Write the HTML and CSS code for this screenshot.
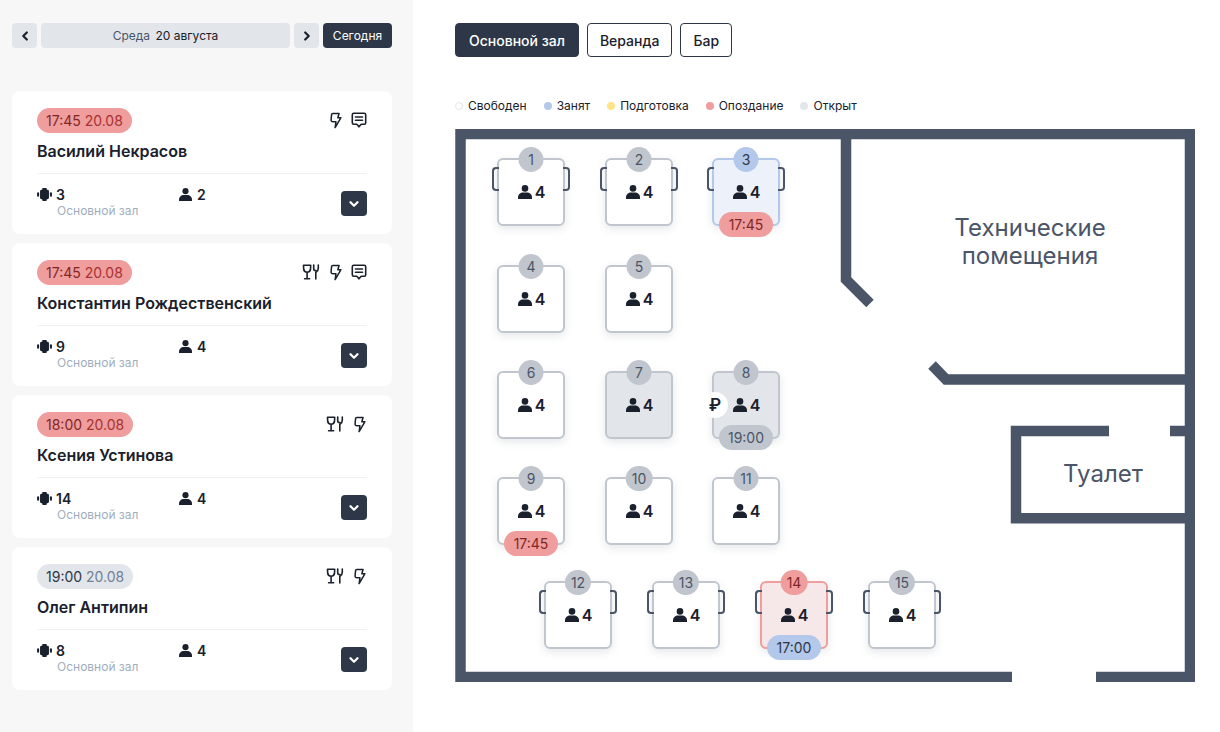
FILE: index.html
```html
<!DOCTYPE html>
<html lang="ru">
  <head>
    <meta charset="UTF-8" />
    <title>Бронирование столов</title>
    <link rel="stylesheet" href="styles.css">
  </head>
  <body>
    <svg class="sprite" width="0" height="0">
      <symbol id="i-user" viewBox="0 0 16 14">
        <circle cx="8" cy="3.4" r="3.3" />
        <path d="M1 14v-1.6C1 9.6 3.6 7.6 6 7.6h4c2.4 0 5 2 5 4.8V14z" />
      </symbol>
      <symbol id="i-table" viewBox="0 0 16 14">
        <rect x="3.2" y="1.8" width="9.6" height="10.4" rx="1.6" />
        <rect x="5.5" y="0" width="5" height="2.6" rx="1" />
        <rect x="5.5" y="11.4" width="5" height="2.6" rx="1" />
        <rect x="0" y="4.6" width="2.2" height="4.8" rx="1" />
        <rect x="13.8" y="4.6" width="2.2" height="4.8" rx="1" />
      </symbol>
      <symbol id="i-bolt" viewBox="0 0 16 18">
        <path class="line" d="M5 1.5h6.8l-1.3 4.6h3.2L7.6 16.5l.9-6.2H5.4C4 10.3 3.2 9.500 3.300 8.200L3.800 2.700C3.900 2 4.300 1.500 5 1.500z" />
      </symbol>
      <symbol id="i-note" viewBox="0 0 16 16">
        <path class="line" d="M2.800 1.200h10.400c.9 0 1.500.6 1.500 1.500v8.100c0 .9-.6 1.500-1.500 1.500H10.200L8 14.800 5.800 12.300H2.800c-.9 0-1.500-.6-1.500-1.500V2.700c0-.9.6-1.500 1.500-1.500z" />
        <path class="line" d="M4.500 5h7M4.500 8.300h7" />
      </symbol>
      <symbol id="i-food" viewBox="0 0 18 16">
        <path class="line" d="M1.500 1.200h7.200L8.500 5.200C8.300 7 7 8.200 5.100 8.200S1.900 7 1.700 5.200zM5.100 8.200v6.300M2.600 14.800h5" />
        <path class="line" d="M11.700 1v3.800c0 1.200 1 1.800 2.100 1.800M16.300 1v3.200c0 2.200-1.100 3.500-2.500 4.300v6.500" />
      </symbol>
      <symbol id="i-left" viewBox="0 0 10 10">
        <path class="line thick" d="M6.800 1.500 3.300 5l3.500 3.500" />
      </symbol>
      <symbol id="i-right" viewBox="0 0 10 10">
        <path class="line thick" d="M3.200 1.500 6.700 5 3.200 8.500" />
      </symbol>
      <symbol id="i-down" viewBox="0 0 10 10">
        <path class="line thick" d="M1.500 3.200 5 6.700l3.500-3.500" />
      </symbol>
    </svg>

    <div class="app">
      <aside class="side">
        <div class="date-bar">
          <button class="nav-btn"><svg class="i-nav"><use href="#i-left" /></svg></button>
          <div class="date-field"><span class="weekday">Среда</span> 20 августа</div>
          <button class="nav-btn"><svg class="i-nav"><use href="#i-right" /></svg></button>
          <button class="today-btn">Сегодня</button>
        </div>

        <div class="cards">
          <section class="card">
            <div class="card-top">
              <span class="pill pill-red">17:45 <span class="pill-date">20.08</span></span>
              <div class="flags">
                <svg class="i-bolt"><use href="#i-bolt" /></svg>
                <svg class="i-note"><use href="#i-note" /></svg>
              </div>
            </div>
            <h3 class="guest">Василий Некрасов</h3>
            <div class="card-info">
              <div class="info-table">
                <div class="info-val"><svg class="i-small"><use href="#i-table" /></svg>3</div>
                <div class="hall">Основной зал</div>
              </div>
              <div class="info-val info-people"><svg class="i-small"><use href="#i-user" /></svg>2</div>
              <button class="more-btn"><svg class="i-nav"><use href="#i-down" /></svg></button>
            </div>
          </section>

          <section class="card">
            <div class="card-top">
              <span class="pill pill-red">17:45 <span class="pill-date">20.08</span></span>
              <div class="flags">
                <svg class="i-food"><use href="#i-food" /></svg>
                <svg class="i-bolt"><use href="#i-bolt" /></svg>
                <svg class="i-note"><use href="#i-note" /></svg>
              </div>
            </div>
            <h3 class="guest">Константин Рождественский</h3>
            <div class="card-info">
              <div class="info-table">
                <div class="info-val"><svg class="i-small"><use href="#i-table" /></svg>9</div>
                <div class="hall">Основной зал</div>
              </div>
              <div class="info-val info-people"><svg class="i-small"><use href="#i-user" /></svg>4</div>
              <button class="more-btn"><svg class="i-nav"><use href="#i-down" /></svg></button>
            </div>
          </section>

          <section class="card">
            <div class="card-top">
              <span class="pill pill-red">18:00 <span class="pill-date">20.08</span></span>
              <div class="flags">
                <svg class="i-food"><use href="#i-food" /></svg>
                <svg class="i-bolt"><use href="#i-bolt" /></svg>
              </div>
            </div>
            <h3 class="guest">Ксения Устинова</h3>
            <div class="card-info">
              <div class="info-table">
                <div class="info-val"><svg class="i-small"><use href="#i-table" /></svg>14</div>
                <div class="hall">Основной зал</div>
              </div>
              <div class="info-val info-people"><svg class="i-small"><use href="#i-user" /></svg>4</div>
              <button class="more-btn"><svg class="i-nav"><use href="#i-down" /></svg></button>
            </div>
          </section>

          <section class="card">
            <div class="card-top">
              <span class="pill pill-grey">19:00 <span class="pill-date">20.08</span></span>
              <div class="flags">
                <svg class="i-food"><use href="#i-food" /></svg>
                <svg class="i-bolt"><use href="#i-bolt" /></svg>
              </div>
            </div>
            <h3 class="guest">Олег Антипин</h3>
            <div class="card-info">
              <div class="info-table">
                <div class="info-val"><svg class="i-small"><use href="#i-table" /></svg>8</div>
                <div class="hall">Основной зал</div>
              </div>
              <div class="info-val info-people"><svg class="i-small"><use href="#i-user" /></svg>4</div>
              <button class="more-btn"><svg class="i-nav"><use href="#i-down" /></svg></button>
            </div>
          </section>
        </div>
      </aside>

      <main class="content">
        <nav class="tabs">
          <button class="tab tab-active">Основной зал</button>
          <button class="tab">Веранда</button>
          <button class="tab">Бар</button>
        </nav>

        <ul class="legend">
          <li><span class="dot dot-free"></span>Свободен</li>
          <li><span class="dot dot-busy"></span>Занят</li>
          <li><span class="dot dot-prep"></span>Подготовка</li>
          <li><span class="dot dot-late"></span>Опоздание</li>
          <li><span class="dot dot-open"></span>Открыт</li>
        </ul>

        <div class="floor">
          <!-- walls, coordinates are relative to the floor box -->
          <svg class="walls" width="740" height="553" viewBox="0 0 740 553">
            <path d="M557 548H735V5H5.500V548H557" />
            <path d="M391 5V150.500L415 174.500" />
            <path d="M477 236 491 250.500H730" />
            <path d="M654 302H561V389.300H730" />
            <path d="M715 302H730" />
            <rect class="gap" x="557" y="540" width="84" height="13" />
          </svg>
          <div class="room room-tech">Технические<br />помещения</div>
          <div class="room room-wc">Туалет</div>

          <!-- row 1 -->
          <div class="table chairs t-1">
            <span class="num">1</span>
            <span class="seats"><svg class="i-seat"><use href="#i-user" /></svg>4</span>
          </div>
          <div class="table chairs t-2">
            <span class="num">2</span>
            <span class="seats"><svg class="i-seat"><use href="#i-user" /></svg>4</span>
          </div>
          <div class="table chairs busy t-3">
            <span class="num">3</span>
            <span class="seats"><svg class="i-seat"><use href="#i-user" /></svg>4</span>
            <span class="time time-red">17:45</span>
          </div>

          <!-- row 2 -->
          <div class="table t-4">
            <span class="num">4</span>
            <span class="seats"><svg class="i-seat"><use href="#i-user" /></svg>4</span>
          </div>
          <div class="table t-5">
            <span class="num">5</span>
            <span class="seats"><svg class="i-seat"><use href="#i-user" /></svg>4</span>
          </div>

          <!-- row 3 -->
          <div class="table t-6">
            <span class="num">6</span>
            <span class="seats"><svg class="i-seat"><use href="#i-user" /></svg>4</span>
          </div>
          <div class="table open t-7">
            <span class="num">7</span>
            <span class="seats"><svg class="i-seat"><use href="#i-user" /></svg>4</span>
          </div>
          <div class="table open t-8">
            <span class="num">8</span>
            <span class="rub">₽</span>
            <span class="seats"><svg class="i-seat"><use href="#i-user" /></svg>4</span>
            <span class="time time-grey">19:00</span>
          </div>

          <!-- row 4 -->
          <div class="table t-9">
            <span class="num">9</span>
            <span class="seats"><svg class="i-seat"><use href="#i-user" /></svg>4</span>
            <span class="time time-red">17:45</span>
          </div>
          <div class="table t-10">
            <span class="num">10</span>
            <span class="seats"><svg class="i-seat"><use href="#i-user" /></svg>4</span>
          </div>
          <div class="table t-11">
            <span class="num">11</span>
            <span class="seats"><svg class="i-seat"><use href="#i-user" /></svg>4</span>
          </div>

          <!-- row 5 -->
          <div class="table chairs t-12">
            <span class="num">12</span>
            <span class="seats"><svg class="i-seat"><use href="#i-user" /></svg>4</span>
          </div>
          <div class="table chairs t-13">
            <span class="num">13</span>
            <span class="seats"><svg class="i-seat"><use href="#i-user" /></svg>4</span>
          </div>
          <div class="table chairs late t-14">
            <span class="num">14</span>
            <span class="seats"><svg class="i-seat"><use href="#i-user" /></svg>4</span>
            <span class="time time-blue">17:00</span>
          </div>
          <div class="table chairs t-15">
            <span class="num">15</span>
            <span class="seats"><svg class="i-seat"><use href="#i-user" /></svg>4</span>
          </div>
        </div>
      </main>
    </div>
  </body>
</html>
```
FILE: styles.css
```css
* {
  box-sizing: border-box;
}

html,
body {
  height: 100%;
}

body {
  margin: 0;
  overflow: hidden;
  font-family: Inter, "Noto Sans", sans-serif;
  color: #1a202c;
  background: #fff;
}

button {
  font-family: inherit;
  border: 0;
  padding: 0;
  cursor: pointer;
}

.sprite {
  position: absolute;
}

.line {
  fill: none;
  stroke: currentColor;
  stroke-width: 1.6;
  stroke-linejoin: round;
  stroke-linecap: round;
}

.line.thick {
  stroke-width: 2.2;
}

.app {
  display: flex;
  height: 732px;
}

/* Sidebar */

.side {
  width: 413px;
  flex: none;
  padding: 23px 21px 0 12px;
  background: #f7f7f8;
}

.date-bar {
  display: flex;
  gap: 4px;
  height: 25px;
  margin-bottom: 43px;
}

.nav-btn {
  display: flex;
  align-items: center;
  justify-content: center;
  width: 25px;
  background: #e2e5ea;
  border-radius: 4px;
  color: #1a202c;
}

.i-nav {
  width: 10px;
  height: 10px;
}

.date-field {
  flex: 1;
  line-height: 25px;
  text-align: center;
  font-size: 12px;
  background: #e2e5ea;
  border-radius: 4px;
}

.weekday {
  color: #4a5568;
  margin-right: 2px;
}

.today-btn {
  width: 69px;
  font-size: 12px;
  color: #fff;
  background: #2d3748;
  border-radius: 4px;
}

.cards {
  display: flex;
  flex-direction: column;
  gap: 9px;
}

.card {
  height: 143px;
  padding: 17px 25px 0;
  background: #fff;
  border-radius: 8px;
}

.card-top {
  display: flex;
  justify-content: space-between;
  align-items: center;
  height: 25px;
}

.pill {
  height: 25px;
  padding: 0 9px;
  line-height: 25px;
  font-size: 14px;
  border-radius: 13px;
}

.pill-red {
  color: #822727;
  background: #ef9d9d;
}

.pill-grey {
  color: #2d3748;
  background: #e2e5ea;
}

.pill-red .pill-date {
  color: #a83232;
}

.pill-grey .pill-date {
  color: #718096;
}

.flags {
  display: flex;
  align-items: center;
  gap: 8px;
  color: #1a202c;
  margin-top: -1px;
}

.i-bolt {
  width: 15px;
  height: 17px;
}

.i-note {
  width: 16px;
  height: 16px;
}

.i-food {
  width: 18px;
  height: 16px;
}

.guest {
  margin: 8px 0 0;
  padding-bottom: 12px;
  font-size: 16px;
  line-height: 20px;
  font-weight: 600;
  border-bottom: 1px solid #f0f1f3;
}

.card-info {
  display: flex;
  position: relative;
  padding-top: 13px;
}

.info-table {
  width: 141px;
}

.info-val {
  display: flex;
  align-items: center;
  gap: 4px;
  height: 15px;
  font-size: 14px;
  font-weight: 600;
}

.i-small {
  width: 15px;
  height: 13px;
  fill: #1a202c;
}

.hall {
  margin: 1px 0 0 20px;
  font-size: 12px;
  line-height: 15px;
  color: #a0aec0;
}

.more-btn {
  display: flex;
  align-items: center;
  justify-content: center;
  width: 26px;
  height: 25px;
  margin: 4px 0 0 auto;
  color: #fff;
  background: #2d3748;
  border-radius: 4px;
}

/* Hall plan */

.content {
  flex: 1;
  padding: 23px 25px 0 42px;
}

.tabs {
  display: flex;
  gap: 8px;
}

.tab {
  height: 34px;
  padding: 0 12px;
  font-size: 14px;
  font-weight: 500;
  color: #1a202c;
  background: #fff;
  border: 1px solid #2d3748;
  border-radius: 4px;
}

.tab-active {
  padding: 0 13px;
  color: #fff;
  background: #2d3748;
}

.legend {
  display: flex;
  gap: 17px;
  list-style: none;
  margin: 40px 0 0;
  padding: 0;
  height: 32px;
  font-size: 12px;
  line-height: 17px;
}

.legend li {
  display: flex;
  align-items: center;
  gap: 5px;
  height: 17px;
}

.dot {
  width: 8px;
  height: 8px;
  border-radius: 50%;
}

.dot-free {
  background: #fff;
  border: 1px solid #e2e5ea;
}

.dot-busy {
  background: #b3c8ea;
}

.dot-prep {
  background: #fde38a;
}

.dot-late {
  background: #ef9d9d;
}

.dot-open {
  background: #e2e5ea;
}

.floor {
  position: relative;
  width: 740px;
  height: 553px;
}

.walls {
  position: absolute;
  left: 0;
  top: 0;
}

.walls path {
  fill: none;
  stroke: #4a5568;
  stroke-width: 10.500;
}

.walls .gap {
  fill: #fff;
}

.room {
  position: absolute;
  text-align: center;
  font-size: 24px;
  line-height: 28px;
  color: #4a5568;
}

.room-tech {
  left: 475px;
  top: 85px;
  width: 200px;
}

.room-wc {
  left: 578px;
  top: 331px;
  width: 140px;
}

.table {
  position: absolute;
  display: flex;
  align-items: center;
  justify-content: center;
  width: 68px;
  height: 68px;
  background: #fff;
  border: 2px solid #c1c6ce;
  border-radius: 6px;
  box-shadow: 0 3px 8px rgba(45, 55, 72, 0.12);
}

.table.chairs::before,
.table.chairs::after {
  content: "";
  position: absolute;
  top: 7px;
  width: 5px;
  height: 20px;
  border: 2px solid #4a5568;
  border-radius: 4px;
  box-shadow: 0 30px 0 -0px transparent;
}

.table.chairs::before {
  left: -7px;
  border-right: 0;
  border-top-right-radius: 0;
  border-bottom-right-radius: 0;
}

.table.chairs::after {
  right: -7px;
  border-left: 0;
  border-top-left-radius: 0;
  border-bottom-left-radius: 0;
}

.table.busy {
  background: #edf2fa;
  border-color: #b3c8ea;
}

.table.late {
  background: #f6e8e8;
  border-color: #ef9d9d;
}

.table.open {
  background: #e2e5ea;
  border-color: #c1c6ce;
}

.num {
  position: absolute;
  left: 50%;
  top: -13px;
  min-width: 25px;
  height: 25px;
  padding: 0 6px;
  transform: translateX(-50%);
  text-align: center;
  line-height: 25px;
  font-size: 14px;
  color: #4a5568;
  background: #c1c6ce;
  border-radius: 13px;
}

.busy .num {
  color: #2d3748;
  background: #b3c8ea;
}

.late .num {
  color: #822727;
  background: #ef9d9d;
}

.seats {
  display: flex;
  align-items: center;
  gap: 2px;
  font-size: 16px;
  font-weight: 600;
  color: #1a202c;
}

.i-seat {
  width: 16px;
  height: 14px;
  fill: #1a202c;
}

.time {
  position: absolute;
  left: 50%;
  bottom: -13px;
  width: 54px;
  height: 25px;
  transform: translateX(-50%);
  text-align: center;
  line-height: 25px;
  font-size: 14px;
  border-radius: 13px;
}

.time-red {
  color: #822727;
  background: #ef9d9d;
}

.time-grey {
  color: #4a5568;
  background: #c1c6ce;
}

.time-blue {
  color: #2d3748;
  background: #b3c8ea;
}

.rub {
  position: absolute;
  left: -12px;
  top: 19px;
  width: 26px;
  height: 26px;
  text-align: center;
  line-height: 26px;
  font-size: 17px;
  font-weight: 600;
  background: #fff;
  border-radius: 50%;
}

/* table places on the plan */

.t-1 { left: 42px; top: 29px; }
.t-2 { left: 150px; top: 29px; }
.t-3 { left: 257px; top: 29px; }
.t-4 { left: 42px; top: 136px; }
.t-5 { left: 150px; top: 136px; }
.t-6 { left: 42px; top: 242px; }
.t-7 { left: 150px; top: 242px; }
.t-8 { left: 257px; top: 242px; }
.t-9 { left: 42px; top: 348px; }
.t-10 { left: 150px; top: 348px; }
.t-11 { left: 257px; top: 348px; }
.t-12 { left: 89px; top: 452px; }
.t-13 { left: 197px; top: 452px; }
.t-14 { left: 305px; top: 452px; }
.t-15 { left: 413px; top: 452px; }
```
